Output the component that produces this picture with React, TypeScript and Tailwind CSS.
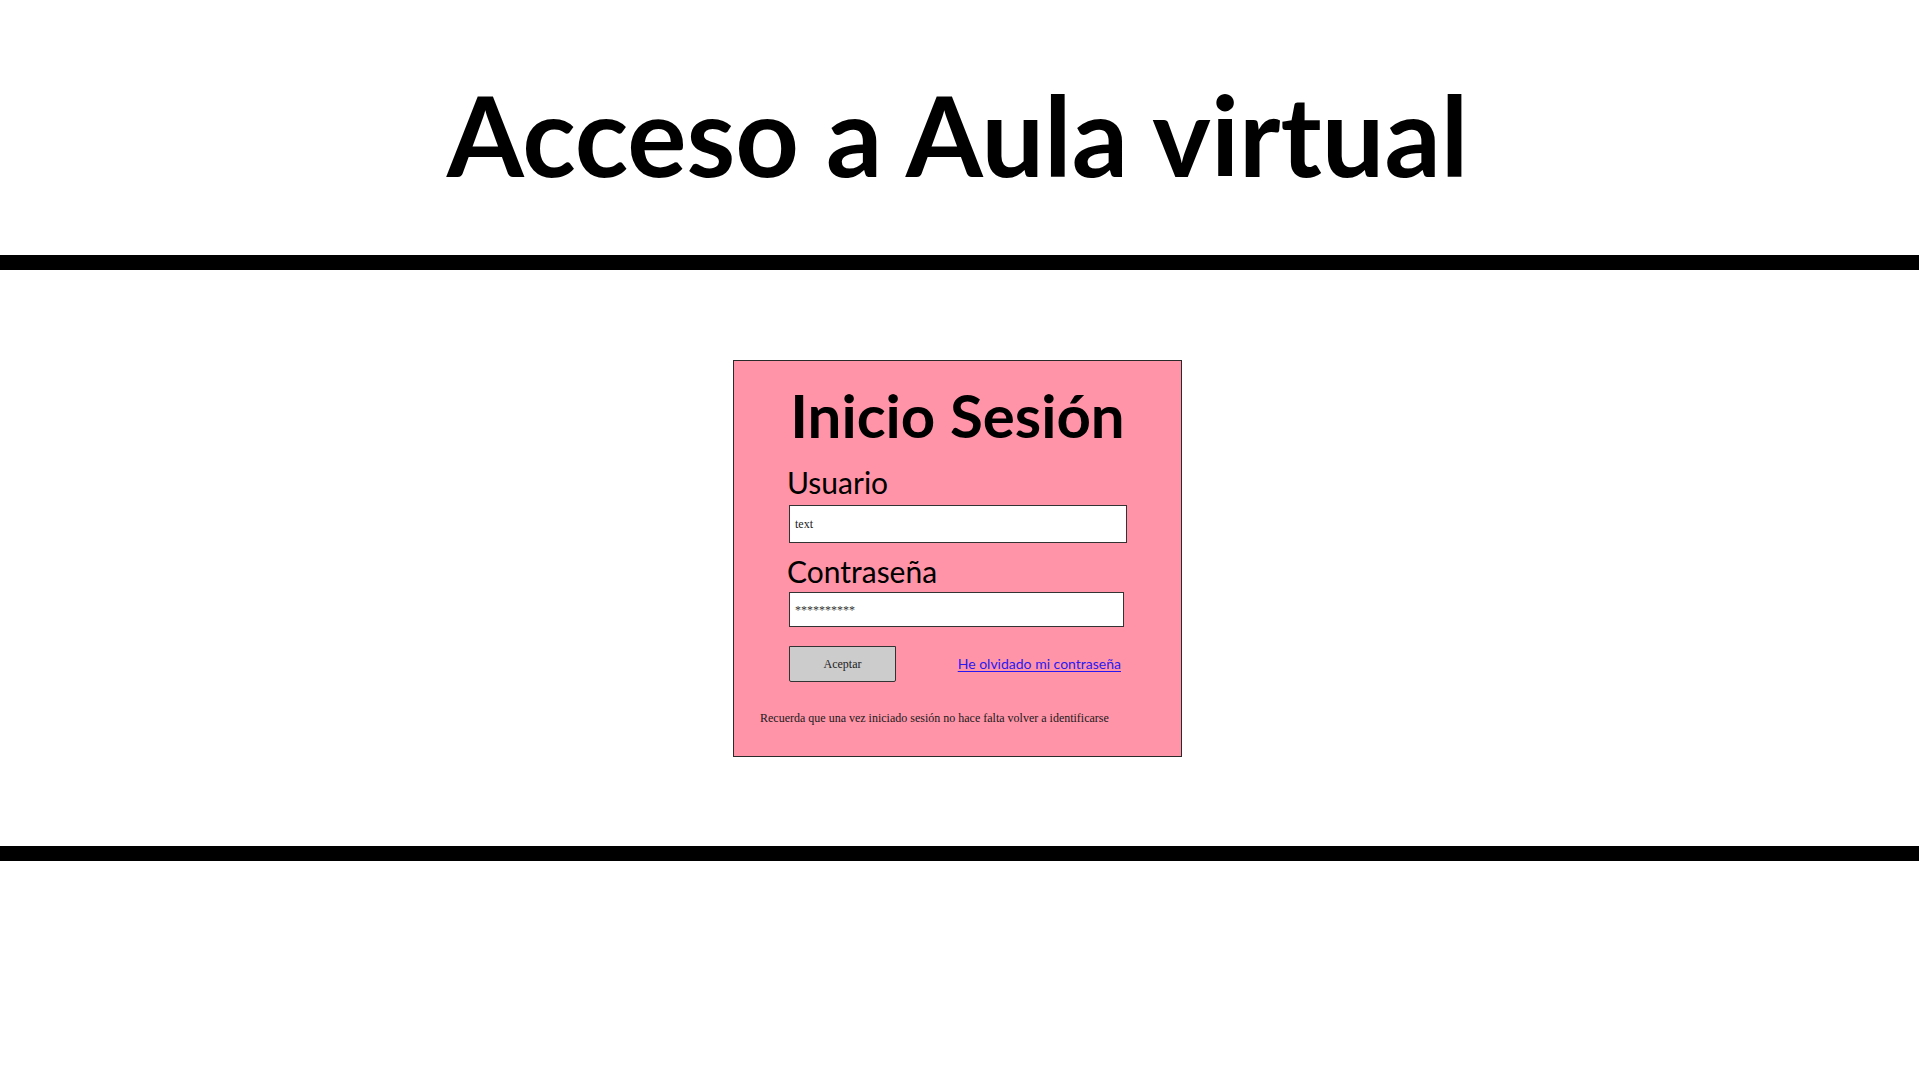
export default function App() {
  return (
    <div className="min-h-screen w-full bg-white flex flex-col font-['Lato',sans-serif] text-black">
      <h1 className="pt-[79px] pr-[4px] text-center text-[111px] leading-none font-bold">
        Acceso a Aula virtual
      </h1>

      <div className="mt-[65px] h-[15px] w-full bg-black" />

      <div className="mt-[90px] flex justify-center pr-[4px]">
        <div className="w-[449px] h-[397px] bg-[#ff94a8] border border-[#2a2a2a] flex flex-col">
          <h2 className="pt-[24px] text-center text-[60px] leading-none font-bold">
            Inicio Sesión
          </h2>

          <div className="pl-[55px] flex flex-col">
            <label className="mt-[22px] -ml-[2px] text-[30px] leading-none">Usuario</label>
            <div className="mt-[8px] w-[338px] h-[38px] bg-white border border-[#333] flex items-center px-[5px] font-['Liberation_Serif',serif] text-[12px] text-[#222]">
              text
            </div>

            <label className="mt-[13px] -ml-[2px] text-[30px] leading-none">Contraseña</label>
            <div className="mt-[6px] w-[335px] h-[35px] bg-white border border-[#333] flex items-center px-[5px] font-['Liberation_Serif',serif] text-[12px] text-[#333]">
              **********
            </div>

            <div className="mt-[19px] w-[332px] flex items-center justify-between">
              <button className="w-[107px] h-[36px] bg-[#cccccc] border border-[#333] rounded-b-[2px] font-['Liberation_Serif',serif] text-[12px] text-[#222]">
                Aceptar
              </button>
              <a
                href="#"
                className="text-[14px] leading-none text-[#2a18f0] underline underline-offset-2"
              >
                He olvidado mi contraseña
              </a>
            </div>
          </div>

          <p className="mt-[30px] pl-[26px] font-['Liberation_Serif',serif] text-[12px] leading-none text-[#1a1a1a]">
            Recuerda que una vez iniciado sesión no hace falta volver a identificarse
          </p>
        </div>
      </div>

      <div className="mt-[89px] h-[15px] w-full bg-black" />
    </div>
  );
}
